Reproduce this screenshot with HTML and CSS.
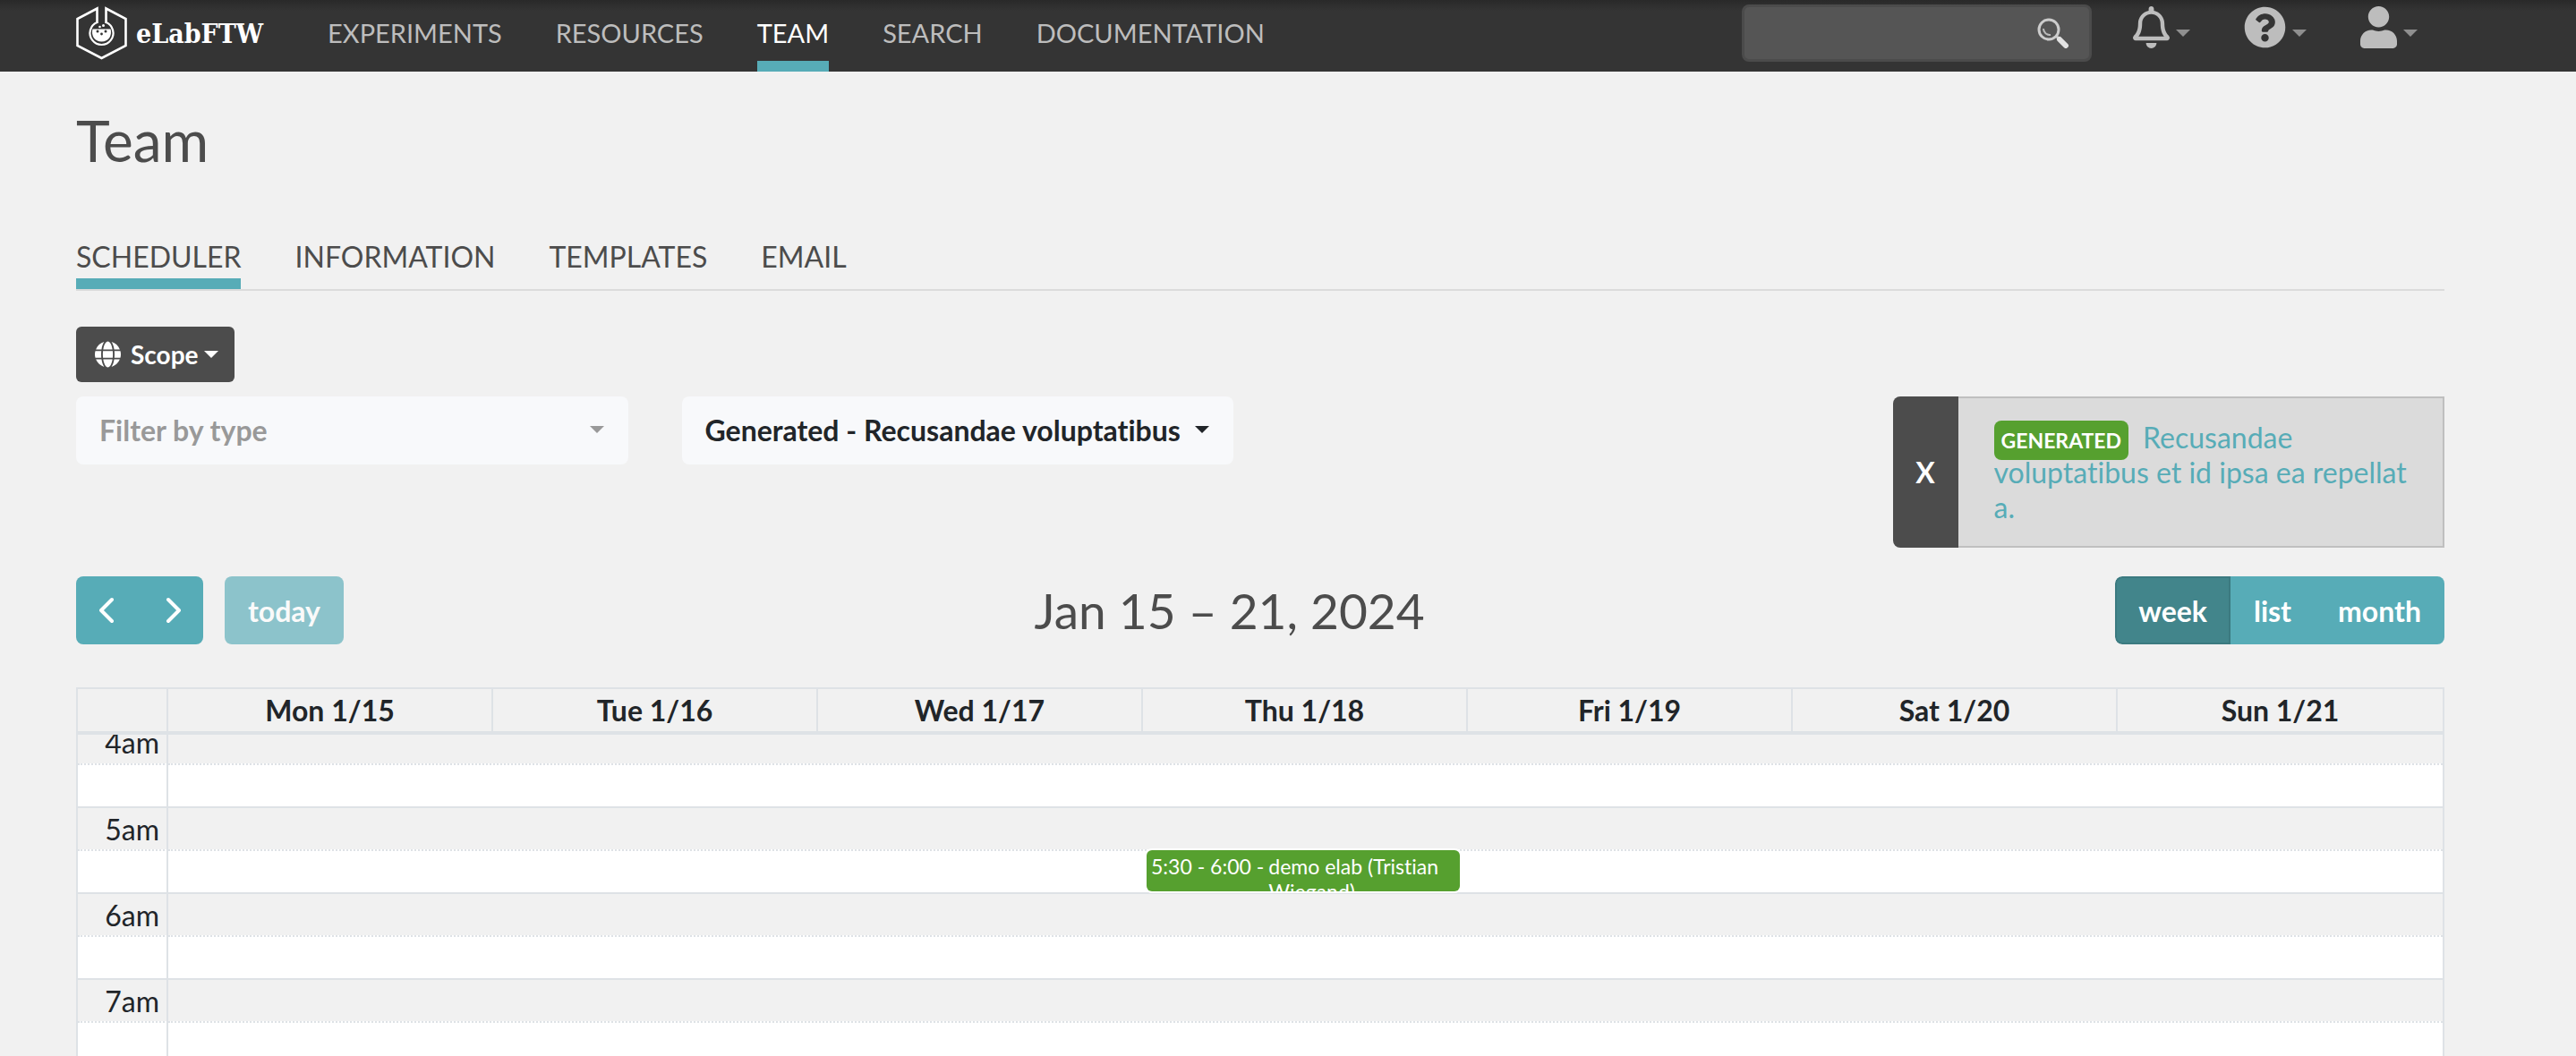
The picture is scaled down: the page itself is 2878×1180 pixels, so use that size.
FILE: index.html
```html
<!DOCTYPE html>
<html lang="en">
<head>
<meta charset="utf-8">
<title>Team - eLabFTW</title>
<link rel="stylesheet" href="styles.css">
</head>
<body>
<header class="topbar">
  <a class="brand" href="#">
    <svg class="brand-mark" viewBox="0 0 57 60" aria-hidden="true">
      <g fill="none" stroke="#fff" stroke-width="2.6">
        <path d="M23.500 19V2.500L1.500 14v30L28.500 58 55.500 44V14L33.500 2.500V19"/>
        <path d="M23.500 18a13 13 0 1 0 10 0" stroke-width="2.200"/>
      </g>
      <path fill="#fff" d="M18.500 25.500h20c2 7-2 14-10 14s-12-7-10-14z"/>
      <g fill="#fff"><circle cx="26.500" cy="23" r="1.300"/><circle cx="30.500" cy="21.500" r="1.500"/></g>
      <g fill="#343434"><circle cx="24" cy="28" r="1.500"/><circle cx="33" cy="28" r="1.500"/><circle cx="28.500" cy="31" r="1.400"/></g>
    </svg>
    <span class="brand-name">eLabFTW</span>
  </a>
  <nav class="mainnav">
    <a href="#">EXPERIMENTS</a>
    <a href="#">RESOURCES</a>
    <a href="#" class="active">TEAM</a>
    <a href="#">SEARCH</a>
    <a href="#">DOCUMENTATION</a>
  </nav>
  <form class="search">
    <input type="search" aria-label="Search">
    <button type="button" aria-label="Search">
      <svg viewBox="0 0 36 34" aria-hidden="true">
        <circle cx="13" cy="13" r="11" fill="none" stroke="#ccc" stroke-width="3"/>
        <path d="M7 12a7 7 0 0 0 8 7" fill="none" stroke="#bbb" stroke-width="2"/>
        <path d="M21 20l4 4" stroke="#ccc" stroke-width="3"/>
        <path d="M25 24l7 7" stroke="#e2e2e2" stroke-width="6" stroke-linecap="round"/>
      </svg>
    </button>
  </form>
  <div class="tools">
    <button type="button" class="tool" aria-label="Notifications">
      <svg class="bell" viewBox="0 0 448 512" aria-hidden="true"><path d="M439.390 362.290c-19.320-20.760-55.470-51.990-55.470-154.290 0-77.700-54.480-139.900-127.940-155.160V32c0-17.670-14.320-32-31.980-32s-31.980 14.330-31.980 32v20.840C118.560 68.100 64.080 130.300 64.080 208c0 102.300-36.150 133.530-55.470 154.290-6 6.450-8.660 14.160-8.610 21.710.11 16.400 12.980 32 32.100 32h383.800c19.120 0 32-15.600 32.100-32 .05-7.550-2.610-15.270-8.610-21.710zM67.530 368c21.220-27.970 44.420-74.330 44.530-159.420 0-.2-.06-.38-.06-.58 0-61.860 50.140-112 112-112s112 50.140 112 112c0 .2-.06.38-.06.58.11 85.100 23.310 131.460 44.530 159.420H67.530zM224 512c35.320 0 63.970-28.650 63.970-64H160.030c0 35.350 28.650 64 63.970 64z"/></svg>
      <span class="caret"></span>
    </button>
    <button type="button" class="tool" aria-label="Help">
      <svg class="help" viewBox="0 0 512 512" aria-hidden="true"><path d="M504 256c0 136.997-111.043 248-248 248S8 392.997 8 256C8 119.083 119.043 8 256 8s248 111.083 248 248zM262.655 90c-54.497 0-89.255 22.957-116.549 63.758-3.536 5.286-2.353 12.415 2.715 16.258l34.699 26.310c5.205 3.947 12.621 3.008 16.665-2.122 17.864-22.658 30.113-35.797 57.303-35.797 20.429 0 45.698 13.148 45.698 32.958 0 14.976-12.363 22.667-32.534 33.976C247.128 238.528 216 254.941 216 296v4c0 6.627 5.373 12 12 12h56c6.627 0 12-5.373 12-12v-1.333c0-28.462 83.186-29.647 83.186-106.667 0-58.002-60.165-102-116.531-102zM256 338c-25.365 0-46 20.635-46 46 0 25.364 20.635 46 46 46s46-20.636 46-46c0-25.365-20.635-46-46-46z"/></svg>
      <span class="caret"></span>
    </button>
    <button type="button" class="tool" aria-label="Account">
      <svg class="user" viewBox="0 0 448 512" aria-hidden="true"><path d="M224 256c70.700 0 128-57.300 128-128S294.700 0 224 0 96 57.300 96 128s57.300 128 128 128zm89.600 32h-16.700c-22.200 10.200-46.900 16-72.900 16s-50.600-5.800-72.900-16h-16.700C60.200 288 0 348.200 0 422.400V464c0 26.500 21.500 48 48 48h352c26.500 0 48-21.500 48-48v-41.600c0-74.200-60.200-134.400-134.400-134.400z"/></svg>
      <span class="caret"></span>
    </button>
  </div>
</header>

<main class="page">
  <h1>Team</h1>
  <nav class="tabs">
    <a href="#" class="active">SCHEDULER</a>
    <a href="#">INFORMATION</a>
    <a href="#">TEMPLATES</a>
    <a href="#">EMAIL</a>
  </nav>

  <button type="button" class="scope">
    <svg viewBox="0 0 496 512" aria-hidden="true"><path d="M336.500 160C322 70.700 287.800 8 248 8s-74 62.700-88.500 152h177zM152 256c0 22.200 1.200 43.500 3.300 64h185.300c2.100-20.500 3.300-41.800 3.300-64s-1.200-43.500-3.300-64H155.300c-2.100 20.500-3.300 41.800-3.300 64zm324.700-96c-28.600-67.900-86.500-120.400-158-141.600 24.400 33.800 41.200 84.700 50 141.600h108zM177.200 18.400C105.800 39.600 47.800 92.100 19.300 160h108c8.700-56.900 25.500-107.800 49.900-141.600zM487.400 192H372.700c2.100 21 3.300 42.500 3.300 64s-1.200 43-3.300 64h114.600c5.500-20.500 8.600-41.800 8.600-64s-3.100-43.500-8.500-64zM120 256c0-21.500 1.200-43 3.300-64H8.600C3.200 212.500 0 233.800 0 256s3.200 43.500 8.600 64h114.600c-2-21-3.200-42.500-3.200-64zm39.500 96c14.500 89.300 48.700 152 88.500 152s74-62.700 88.500-152h-177zm159.300 141.600c71.400-21.200 129.400-73.700 158-141.600h-108c-8.800 56.900-25.600 107.800-50 141.600zM19.300 352c28.600 67.900 86.500 120.400 158 141.600-24.400-33.800-41.200-84.700-50-141.600h-108z"/></svg>
    <span>Scope</span><span class="caret"></span>
  </button>

  <div class="filters">
    <button type="button" class="picker muted"><span>Filter by type</span><span class="caret"></span></button>
    <button type="button" class="picker"><span>Generated - Recusandae voluptatibus</span><span class="caret"></span></button>
    <div class="selected">
      <button type="button" class="clear">X</button>
      <p class="selected-text"><span class="badge">GENERATED</span><a href="#">Recusandae voluptatibus et id ipsa ea repellat a.</a></p>
    </div>
  </div>

  <div class="toolbar">
    <div class="left">
      <div class="group">
        <button type="button" class="btn arrow" aria-label="Previous week"><svg viewBox="0 0 20 32"><path d="M14 4 2 16l12 12"/></svg></button>
        <button type="button" class="btn arrow" aria-label="Next week"><svg viewBox="0 0 20 32"><path d="M6 4l12 12L6 28"/></svg></button>
      </div>
      <button type="button" class="btn today" disabled>today</button>
    </div>
    <h2>Jan 15 – 21, 2024</h2>
    <div class="group right">
      <button type="button" class="btn on">week</button>
      <button type="button" class="btn">list</button>
      <button type="button" class="btn">month</button>
    </div>
  </div>

  <section class="calendar">
    <table class="days">
      <thead><tr>
        <th class="axis"></th>
        <th>Mon 1/15</th><th>Tue 1/16</th><th>Wed 1/17</th><th>Thu 1/18</th><th>Fri 1/19</th><th>Sat 1/20</th><th>Sun 1/21</th>
      </tr></thead>
    </table>
    <div class="scroller">
      <div class="timegrid">
        <table class="slots">
          <tbody>
            <tr><th class="axis">4am</th><td></td></tr>
            <tr class="half"><th class="axis"></th><td></td></tr>
            <tr><th class="axis">5am</th><td></td></tr>
            <tr class="half"><th class="axis"></th><td></td></tr>
            <tr><th class="axis">6am</th><td></td></tr>
            <tr class="half"><th class="axis"></th><td></td></tr>
            <tr><th class="axis">7am</th><td></td></tr>
            <tr class="half"><th class="axis"></th><td></td></tr>
          </tbody>
        </table>
        <div class="events">
          <a href="#" class="event"><span class="time">5:30 - 6:00 -</span><span>demo elab (Tristian Wiegand)</span></a>
        </div>
      </div>
    </div>
  </section>
</main>
</body>
</html>
```

FILE: styles.css
```css
* { box-sizing: border-box; }

html { overflow: hidden; }

body {
  margin: 0;
  background: #f1f1f1;
  color: #212529;
  font-family: Lato, sans-serif;
  font-size: 32px;
  line-height: 39px;
  font-variant-ligatures: none;
  height: 100vh;
  display: flex;
  flex-direction: column;
}

button, input { font: inherit; font-variant-ligatures: none; margin: 0; border: 0; }
button { cursor: pointer; }
a { text-decoration: none; }

.caret {
  border: 8px solid transparent;
  border-top-color: currentColor;
  border-bottom: 0;
  flex: none;
}

/* Top bar */
.topbar {
  flex: none;
  display: flex;
  height: 80px;
  padding: 0 177px 0 85px;
  background: #343434 linear-gradient(#292929, #343434) no-repeat top / 100% 12px;
}

.brand {
  display: flex;
  align-items: center;
  gap: 10px;
  height: 74px;
  margin-right: 72px;
  color: #fff;
}
.brand-mark { width: 57px; height: 60px; }
.brand-name {
  font-family: "DejaVu Serif Condensed", "DejaVu Serif", serif;
  font-weight: bold;
  font-size: 30px;
}

.mainnav { display: flex; gap: 60px; font-size: 29px; }
.mainnav a {
  padding-top: 17px;
  color: #bdbdbd;
  border-bottom: 12px solid transparent;
}
.mainnav .active { color: #fff; border-color: #57acb7; }

.search {
  display: flex;
  width: 391px;
  height: 64px;
  margin: 5px 0 0 auto;
  background: #555;
  border: 3px solid #4b4b4b;
  border-radius: 8px;
}
.search input { flex: 1; min-width: 0; padding: 0 16px; background: none; color: #fff; }
.search button { display: flex; align-items: center; padding: 0 22px 0 0; background: none; }
.search svg { width: 36px; height: 34px; }

.tools { display: flex; gap: 60px; height: 60px; margin-left: 46px; }
.tool { display: flex; align-items: center; gap: 7px; padding: 0; background: none; color: #8f8f8f; }
.tool svg { height: 47px; fill: #bdbdbd; }
.tool .caret { margin-top: 14px; }
.bell, .user { width: 41px; }
.help { width: 47px; }

/* Page */
.page {
  flex: 1;
  min-height: 0;
  display: flex;
  flex-direction: column;
  padding: 38px 147px 0 85px;
}

h1 { margin: 0; font-size: 64px; line-height: 78px; font-weight: 400; color: #4c4c4c; }

.tabs { display: flex; gap: 60px; margin-top: 71px; border-bottom: 2px solid #dbdbdb; }
.tabs a { padding-bottom: 5px; border-bottom: 12px solid transparent; color: #4c4c4c; }
.tabs .active { border-color: #57acb7; }

.scope {
  display: flex;
  align-items: center;
  align-self: flex-start;
  height: 62px;
  margin: 40px 0 16px;
  padding: 0 18px 0 21px;
  background: #4c4c4c;
  color: #fff;
  border-radius: 6px;
  font-size: 28px;
  font-weight: 700;
}
.scope svg { width: 29px; height: 30px; margin-right: 11px; fill: #fff; }
.scope .caret { margin-left: 6px; }

.filters { display: grid; grid-template-columns: repeat(4, 1fr); gap: 60px; align-items: start; }
.picker {
  display: flex;
  align-items: center;
  justify-content: space-between;
  height: 76px;
  padding: 0 27px 2px 26px;
  background: #f8f9fb;
  color: #212529;
  border-radius: 8px;
  font-weight: 700;
  white-space: nowrap;
}
.muted { color: #999; }
.selected { grid-column: 4; display: flex; }
.clear {
  width: 73px;
  padding: 0;
  background: #4c4c4c;
  color: #fff;
  border-radius: 8px 0 0 8px;
  font-weight: 700;
}
.selected-text {
  flex: 1;
  margin: 0;
  padding: 24px 20px 24px 40px;
  background: #dbdbdb;
  border: 2px solid #bfbfbf;
  border-left: 0;
}
.selected-text a { color: #57acb7; }
.badge {
  padding: 8px;
  margin-right: 16px;
  background: #56a02f;
  color: #fff;
  border-radius: 8px;
  font-size: 23px;
  line-height: 24px;
  font-weight: 700;
}

/* Calendar toolbar */
.toolbar { display: flex; align-items: center; justify-content: space-between; margin: 32px 0 48px; }
.toolbar h2 { margin: 0; font-size: 55px; line-height: 68px; font-weight: 400; color: #4c4c4c; }
.left { display: flex; gap: 24px; }
.group { display: flex; border-radius: 8px; overflow: hidden; }
.btn { height: 76px; padding: 0 26px; background: #57acb7; color: #fff; font-weight: 700; }
.arrow { width: 71px; padding: 0; line-height: 0; }
.arrow svg { width: 20px; height: 32px; fill: none; stroke: #fff; stroke-width: 4; stroke-linecap: round; stroke-linejoin: round; }
.today { border-radius: 8px; opacity: .65; }
.on { padding: 0 24px; background: #42858b; border: 2px solid #3b7a80; border-radius: 8px 0 0 8px; }

/* Week grid */
.calendar {
  flex: 1;
  min-height: 0;
  display: flex;
  flex-direction: column;
  border: 2px solid #dee2e6;
  border-bottom: 0;
}
table { width: 100%; table-layout: fixed; border-collapse: separate; border-spacing: 0; }
th, td { padding: 0; }
.axis { width: 101px; border-right: 2px solid #dee2e6; }
.days { border-bottom: 4px solid #dee2e6; }
.days th { height: 47px; border-right: 2px solid #dee2e6; }
.days th:last-child { border-right: 0; }
.scroller { flex: 1; min-height: 0; overflow: hidden; }
.timegrid { position: relative; margin-top: -16px; }
.slots th, .slots td { height: 48px; }
.slots th { padding-right: 8px; text-align: right; font-weight: 400; }
.slots tr:not(:first-child) > * { border-top: 2px solid #dee2e6; }
.slots .half { background: #fff; }
.slots tr.half > * { border-top-style: dotted; }

.events {
  position: absolute;
  inset: 0 0 0 101px;
  display: grid;
  grid-template-columns: repeat(7, 1fr);
  align-items: start;
}
.event {
  grid-column: 4;
  display: flex;
  gap: 5px;
  height: 46px;
  margin: 145px 9px 0 4px;
  padding: 4px 5px 2px;
  background: #56a02f;
  color: #fff;
  border-radius: 6px;
  box-shadow: 0 0 0 2px #fff;
  font-size: 23px;
  line-height: 28px;
  overflow: hidden;
}
.event .time { flex: none; }
```
